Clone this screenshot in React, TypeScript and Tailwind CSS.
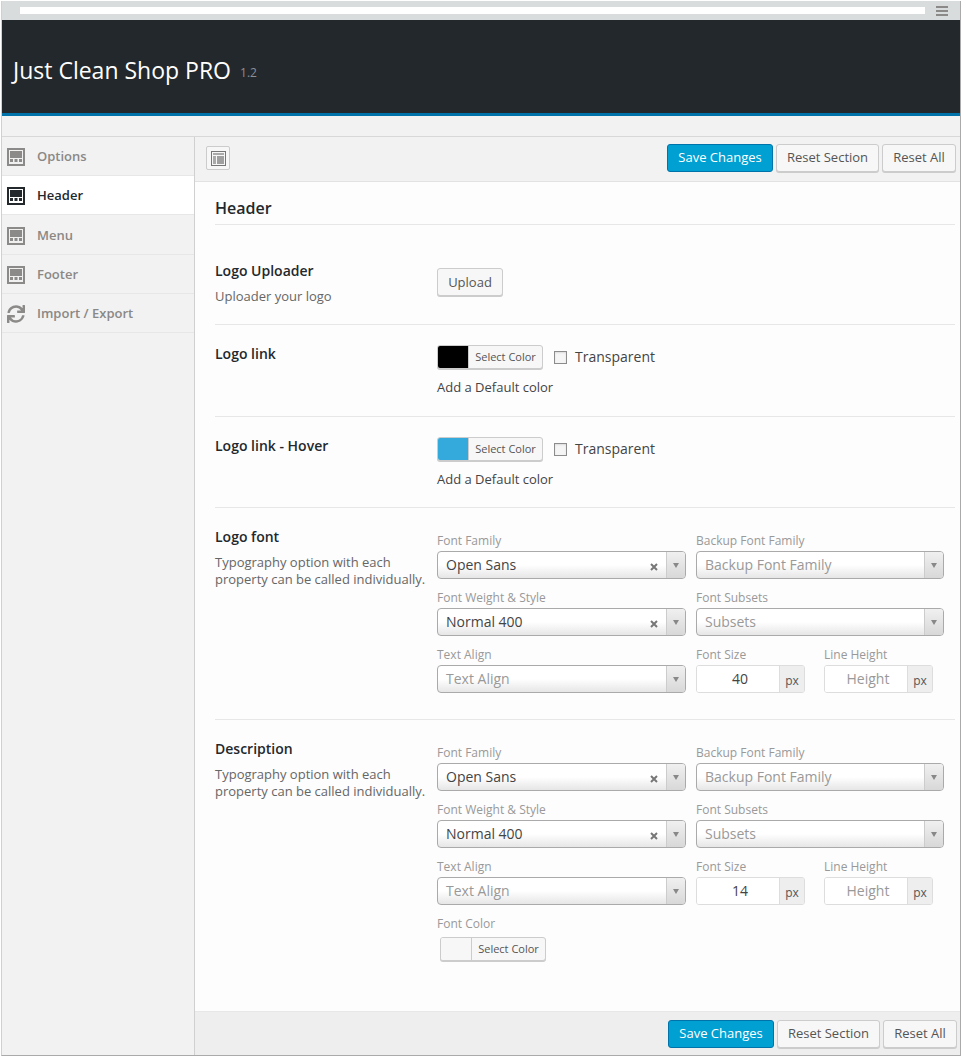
import React from "react";
import { FaSync } from "react-icons/fa";

function LayoutIcon({ dark }: { dark?: boolean }) {
  const c = dark ? "#23282d" : "#8c8a88";
  return (
    <svg width="18" height="18" viewBox="0 0 18 18" className="shrink-0">
      <rect x="0" y="0" width="18" height="18" fill={c} />
      <rect x="2" y="2" width="14" height="14" fill={dark ? "#fff" : "#f0f0f0"} />
      <rect x="3" y="3" width="12" height="7" fill={c} />
      <rect x="3" y="11" width="3" height="3" fill={c} />
      <rect x="7.5" y="11" width="3" height="3" fill={c} />
      <rect x="12" y="11" width="3" height="3" fill={c} />
    </svg>
  );
}

function NavItem({ label, active, refresh }: { label: string; active?: boolean; refresh?: boolean }) {
  return (
    <div className={`h-[39px] flex items-center pl-[5px] pt-[1px] border-b ${active ? "bg-white border-[#e7e7e7] text-[#23282d]" : "border-[#e7e7e7] text-[#8a8886]"}`}>
      {refresh ? <FaSync className="w-[18px] h-[18px] text-[#8c8a88]" /> : <LayoutIcon dark={active} />}
      <span className="ml-[12px] text-[13px] font-semibold">{label}</span>
    </div>
  );
}

function Buttons() {
  return (
    <div className="flex gap-[3px]">
      <button className="h-[28px] w-[106px] rounded-[3px] bg-[#00a0d2] border border-[#0073aa] text-white text-[13px]">Save Changes</button>
      <button className="h-[28px] w-[103px] rounded-[3px] bg-[#f7f7f7] border border-[#cccccc] text-[#555] text-[13px] shadow-[0_1px_0_#ccc]">Reset Section</button>
      <button className="h-[28px] w-[74px] rounded-[3px] bg-[#f7f7f7] border border-[#cccccc] text-[#555] text-[13px] shadow-[0_1px_0_#ccc]">Reset All</button>
    </div>
  );
}

function ColorButton({ color }: { color: string }) {
  return (
    <div className="h-[24px] w-[106px] flex rounded-[3px] border border-[#ccc] bg-[#f7f7f7] shadow-[0_1px_0_#ccc] overflow-hidden">
      <div className="w-[31px] border-r border-[#ccc]" style={{ backgroundColor: color }} />
      <div className="flex-1 text-center text-[11px] leading-[22px] text-[#555]">Select Color</div>
    </div>
  );
}

function ColorField({ color }: { color: string }) {
  return (
    <div>
      <div className="flex items-center">
        <ColorButton color={color} />
        <div className="ml-[11px] w-[13px] h-[13px] border border-[#8c8c8c] bg-[#f5f5f5] shadow-[inset_0_1px_2px_rgba(0,0,0,0.1)]" />
        <span className="ml-[8px] text-[14px] leading-[20px] text-[#444]">Transparent</span>
      </div>
      <div className="mt-[9px] text-[13px] leading-[18px] text-[#444]">Add a Default color</div>
    </div>
  );
}

function Select({ value, placeholder, clear }: { value?: string; placeholder?: string; clear?: boolean }) {
  return (
    <div className="h-[28px] flex rounded-[4px] border border-[#aaa] bg-gradient-to-b from-white from-50% to-[#e6e6e6] overflow-hidden">
      <div className={`flex-1 pl-[8px] text-[14px] leading-[26px] ${value ? "text-[#444]" : "text-[#999]"}`}>{value ?? placeholder}</div>
      {clear && (
        <div className="w-[26px] flex items-center justify-center pt-[3px] pl-[2px]">
          <svg width="8" height="8" viewBox="0 0 8 8">
            <path d="M1 1 L7 7 M7 1 L1 7" stroke="#777" strokeWidth="2" />
          </svg>
        </div>
      )}
      <div className="w-[19px] flex items-center justify-center border-l border-[#ccc] bg-gradient-to-b from-[#f0f0f0] to-[#d8d8d8]">
        <span className="w-0 h-0 border-x-[3.5px] border-x-transparent border-t-[5px] border-t-[#888]" />
      </div>
    </div>
  );
}

function Num({ value, placeholder }: { value?: string; placeholder?: string }) {
  return (
    <div className="w-[109px] h-[28px] flex rounded-[3px] border border-[#ddd] overflow-hidden">
      <div className={`flex-1 bg-white pl-[4px] text-center text-[14px] leading-[26px] ${value ? "text-[#444]" : "text-[#999]"}`}>{value ?? placeholder}</div>
      <div className="w-[25px] bg-[#eee] border-l border-[#ddd] text-center text-[12px] leading-[30px] text-[#555]">px</div>
    </div>
  );
}

function Label({ children }: { children: React.ReactNode }) {
  return <div className="h-[23px] leading-[26px] text-[12px] text-[#999]">{children}</div>;
}

function Typography({ size }: { size: string }) {
  return (
    <div className="grid grid-cols-[249px_248px] gap-x-[10px] gap-y-[6px]">
      <div><Label>Font Family</Label><Select value="Open Sans" clear /></div>
      <div><Label>Backup Font Family</Label><Select placeholder="Backup Font Family" /></div>
      <div><Label>Font Weight &amp; Style</Label><Select value="Normal 400" clear /></div>
      <div><Label>Font Subsets</Label><Select placeholder="Subsets" /></div>
      <div><Label>Text Align</Label><Select placeholder="Text Align" /></div>
      <div className="flex gap-[19px]">
        <div><Label>Font Size</Label><Num value={size} /></div>
        <div><Label>Line Height</Label><Num placeholder="Height" /></div>
      </div>
    </div>
  );
}

function Row({ title, desc, children, h, pt, last }: { title: string; desc?: React.ReactNode; children: React.ReactNode; h: string; pt: string; last?: boolean }) {
  return (
    <div className={`flex ${h} ${pt} ${last ? "" : "border-b border-[#e7e7e7]"}`}>
      <div className="w-[222px] shrink-0">
        <div className="text-[14px] font-semibold leading-[18px] text-[#23282d]">{title}</div>
        {desc && <div className="mt-[8px] text-[13px] leading-[17px] text-[#666]">{desc}</div>}
      </div>
      <div>{children}</div>
    </div>
  );
}

const typoDesc = <>Typography option with each<br />property can be called individually.</>;

export default function App() {
  return (
    <div className="w-[962px] h-[1057px] bg-white font-['Open_Sans',sans-serif] pl-[1px] pr-[1px] pt-[1px] overflow-hidden">
      <div className="w-[960px] h-[1055px] flex flex-col border-b border-x border-[#aaa] border-l-[#d0d0d0]">
        <div className="h-[19px] shrink-0 bg-[#d8dcdc] flex items-start">
          <div className="ml-[18px] mt-[6px] w-[905px] h-[7px] bg-white" />
          <div className="ml-[11px] mt-[5px] w-[12px] flex flex-col gap-[2px]">
            <span className="h-[2px] bg-[#8c8a88]" />
            <span className="h-[2px] bg-[#8c8a88]" />
            <span className="h-[2px] bg-[#8c8a88]" />
          </div>
        </div>
        <div className="h-[93px] shrink-0 bg-[#23282d] flex items-center pl-[11px] pt-[8px]">
          <span className="text-[23px] text-white">Just Clean Shop PRO</span>
          <span className="ml-[9px] mt-[4px] text-[12px] text-[#8a8f96]">1.2</span>
        </div>
        <div className="h-[3px] shrink-0 bg-[#0073aa]" />
        <div className="h-[21px] shrink-0 bg-[#f2f2f2] border-b border-[#d8d8d8]" />
        <div className="flex-1 flex min-h-0">
          <div className="w-[193px] shrink-0 bg-[#f2f2f2] border-r border-[#d0d0d0]">
            <NavItem label="Options" />
            <NavItem label="Header" active />
            <div className="h-[1px]" />
            <NavItem label="Menu" />
            <NavItem label="Footer" />
            <NavItem label="Import / Export" refresh />
          </div>
          <div className="flex-1 flex flex-col min-w-0 bg-[#fdfdfd]">
            <div className="h-[45px] shrink-0 bg-[#f2f2f2] border-b border-[#e2e2e2] flex items-start justify-between pl-[11px] pr-[4px] pt-[7px]">
              <div className="w-[24px] h-[24px] mt-[2px] rounded-[2px] border border-[#ccc] bg-[#f7f7f7] flex items-center justify-center">
                <svg width="15" height="15" viewBox="0 0 15 15">
                  <rect x="0.5" y="0.5" width="14" height="14" fill="none" stroke="#777" />
                  <rect x="2" y="2" width="11" height="2" fill="#aaa" />
                  <rect x="2" y="5" width="3" height="8" fill="#aaa" />
                  <rect x="6" y="5" width="7" height="8" fill="#a0a0a0" />
                </svg>
              </div>
              <Buttons />
            </div>
            <div className="flex-1 pl-[20px] pr-[5px]">
              <div className="h-[43px] border-b border-[#e7e7e7] pt-[14px] text-[16px] font-semibold leading-[24px] text-[#23282d]">Header</div>
              <div className="h-[1px]" />
              <Row title="Logo Uploader" desc="Uploader your logo" h="h-[99px]" pt="pt-[36px]">
                <button className="mt-[6px] pt-[1px] h-[28px] w-[66px] rounded-[3px] border border-[#ccc] bg-[#f7f7f7] text-[13px] text-[#555] shadow-[0_1px_0_#ccc]">Upload</button>
              </Row>
              <Row title="Logo link" h="h-[92px]" pt="pt-[20px]">
                <ColorField color="#000000" />
              </Row>
              <Row title="Logo link - Hover" h="h-[91px]" pt="pt-[20px]">
                <ColorField color="#33a9dc" />
              </Row>
              <Row title="Logo font" desc={typoDesc} h="h-[212px]" pt="pt-[20px]">
                <Typography size="40" />
              </Row>
              <Row title="Description" desc={typoDesc} h="h-[290px]" pt="pt-[20px]" last>
                <Typography size="14" />
                <div className="mt-[6px] h-[23px] leading-[26px] text-[12px] text-[#999]">Font Color</div>
                <div className="ml-[3px] mt-[3px]"><ColorButton color="#f7f7f7" /></div>
              </Row>
            </div>
            <div className="h-[44px] shrink-0 bg-[#eeeeee] border-t border-[#e7e7e7] flex items-center justify-end pr-[3px]">
              <Buttons />
            </div>
          </div>
        </div>
      </div>
    </div>
  );
}
